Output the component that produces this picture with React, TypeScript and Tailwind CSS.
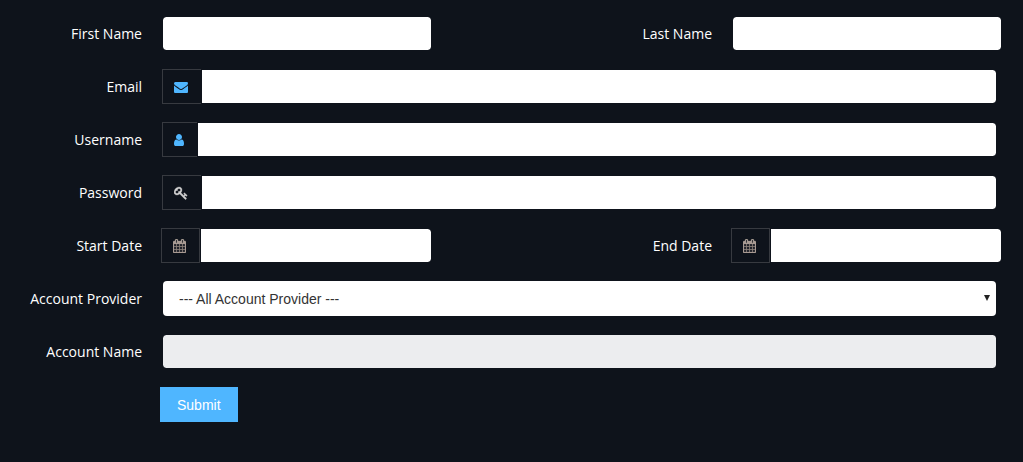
import React from 'react';

const ENVELOPE =
    'M1792 710v794q0 66-47 113t-113 47h-1472q-66 0-113-47t-47-113v-794q44 49 101 87 362 246 497 345 57 42 92.5 65.5t94.5 48 110 24.5h2q51 0 110-24.5t94.5-48 92.5-65.5q170-123 498-345 57-39 100-87zm0-294q0 79-49 151t-122 123q-376 261-468 325-10 7-42.5 31t-54 38.5-52 32.5-57.5 27-50 9h-2q-23 0-50-9t-57.5-27-52-32.5-54-38.5-42.5-31q-91-64-262-182.5t-205-142.5q-62-42-117-115.5t-55-136.5q0-78 41.5-130t118.5-52h1472q65 0 112.5 47t47.5 113z';
const USER =
    'M1536 1399q0 109-62.5 187t-150.5 78h-854q-88 0-150.5-78t-62.5-187q0-85 8.5-160.5t31.5-152 58.5-131 94-89 134.5-34.5q131 128 313 128t313-128q76 0 134.5 34.5t94 89 58.5 131 31.5 152 8.5 160.5zm-256-887q0 159-112.5 271.5t-271.5 112.5-271.5-112.5-112.5-271.5 112.5-271.5 271.5-112.5 271.5 112.5 112.5 271.5z';
const KEY =
    'M832 512q0-80-56-136t-136-56-136 56-56 136q0 42 19 83-41-19-83-19-80 0-136 56t-56 136 56 136 136 56 136-56 56-136q0-42-19-83 41 19 83 19 80 0 136-56t56-136zm851 704q0 17-49 66t-66 49q-9 0-28.5-16t-36.5-33-38.5-40-24.5-26l-96 96 220 220q28 28 28 68 0 42-39 81t-81 39q-40 0-68-28l-671-671q-176 131-365 131-163 0-265.5-102.5t-102.5-265.5q0-160 95-313t248-248 313-95q163 0 265.5 102.5t102.5 265.5q0 189-131 365l355 355 96-96q-3-3-26-24.5t-40-38.5-33-36.5-16-28.5q0-17 49-66t66-49q13 0 23 10 6 6 46 44.5t82 79.5 86.5 86 73 78 28.5 41z';
const CALENDAR =
    'M192 1664h288v-288h-288v288zm352 0h320v-288h-320v288zm-352-352h288v-320h-288v320zm352 0h320v-320h-320v320zm-352-384h288v-288h-288v288zm736 736h320v-288h-320v288zm-384-736h320v-288h-320v288zm768 736h288v-288h-288v288zm-384-352h320v-320h-320v320zm-352-864v-288q0-13-9.5-22.5t-22.5-9.5h-64q-13 0-22.5 9.5t-9.5 22.5v288q0 13 9.5 22.5t22.5 9.5h64q13 0 22.5-9.5t9.5-22.5zm736 864h288v-320h-288v320zm-384-384h320v-288h-320v288zm384 0h288v-288h-288v288zm32-480v-288q0-13-9.5-22.5t-22.5-9.5h-64q-13 0-22.5 9.5t-9.5 22.5v288q0 13 9.5 22.5t22.5 9.5h64q13 0 22.5-9.5t9.5-22.5zm384-64v1280q0 52-38 90t-90 38h-1408q-52 0-90-38t-38-90v-1280q0-52 38-90t90-38h128v-96q0-66 47-113t113-47h64q66 0 113 47t47 113v96h384v-96q0-66 47-113t113-47h64q66 0 113 47t47 113v96h128q52 0 90 38t38 90z';

const wideRow = 'grid grid-cols-[142px_minmax(0,1fr)] items-center gap-x-5 pr-[26px]';
const splitRow = 'grid grid-cols-[142px_minmax(0,1fr)_260px_minmax(0,1fr)] items-center gap-x-5 pr-[21px]';
const addon = 'flex h-[35px] shrink-0 items-center border border-[#373a40] pr-[13px] pl-[11px]';
const control =
    "block h-[35px] w-full min-w-0 border border-[#0e131b] bg-white bg-clip-padding px-4 font-['Liberation_Sans',Arial,sans-serif] text-sm text-[#333] outline-none disabled:bg-[#ecedef]";

const Label: React.FC<{ htmlFor: string; children: React.ReactNode }> = ({ htmlFor, children }) => (
    <label htmlFor={htmlFor} className="text-right text-sm leading-5 whitespace-nowrap text-white">
        {children}
    </label>
);

interface IconInputProps {
    id: string;
    type?: string;
    icon: React.ReactNode;
}

const IconInput: React.FC<IconInputProps> = ({ id, type = 'text', icon }) => (
    <div className="flex">
        <span className={`${addon} border-r-0`}>{icon}</span>
        <input id={id} type={type} className={`${control} rounded-r`} />
    </div>
);

const DateInput: React.FC<{ id: string }> = ({ id }) => (
    <div className="-ml-px flex">
        <span className={addon}>
            <svg
                viewBox="64 0 1664 1792"
                className="h-[14px] w-[13px] fill-[#a89c94] stroke-[#a89c94] stroke-[36]"
            >
                <path d={CALENDAR} />
            </svg>
        </span>
        <input id={id} type="text" className={`${control} rounded-r`} />
    </div>
);

export default function App() {
    return (
        <div className="min-h-screen bg-[#0e131b] font-['Open_Sans',sans-serif]">
            <form className="flex flex-col gap-[18px] py-4" onSubmit={(e) => e.preventDefault()}>
                <div className={splitRow}>
                    <Label htmlFor="first-name">First Name</Label>
                    <input id="first-name" type="text" className={`${control} rounded`} />
                    <Label htmlFor="last-name">Last Name</Label>
                    <input id="last-name" type="text" className={`${control} rounded`} />
                </div>

                <div className={wideRow}>
                    <Label htmlFor="email">Email</Label>
                    <IconInput
                        id="email"
                        type="email"
                        icon={
                            <svg viewBox="0 0 1792 1792" className="h-[14px] w-[14px] fill-[#4fb6ff]">
                                <path d={ENVELOPE} />
                            </svg>
                        }
                    />
                </div>

                <div className={wideRow}>
                    <Label htmlFor="username">Username</Label>
                    <IconInput
                        id="username"
                        icon={
                            <svg viewBox="256 0 1280 1792" className="h-[14px] w-[10px] fill-[#4fb6ff]">
                                <path d={USER} />
                            </svg>
                        }
                    />
                </div>

                <div className={wideRow}>
                    <Label htmlFor="password">Password</Label>
                    <IconInput
                        id="password"
                        type="password"
                        icon={
                            <svg
                                viewBox="0 0 1792 1792"
                                className="h-[14px] w-[14px] fill-[#d0d0d0] stroke-[#d0d0d0] stroke-[40]"
                            >
                                <path d={KEY} />
                            </svg>
                        }
                    />
                </div>

                <div className={splitRow}>
                    <Label htmlFor="start-date">Start Date</Label>
                    <DateInput id="start-date" />
                    <Label htmlFor="end-date">End Date</Label>
                    <DateInput id="end-date" />
                </div>

                <div className={wideRow}>
                    <Label htmlFor="provider">Account Provider</Label>
                    <div className="relative px-px">
                        <select
                            id="provider"
                            className="block h-[35px] w-full appearance-none rounded bg-white px-4 font-['Liberation_Sans',Arial,sans-serif] text-sm text-[#333] outline-none"
                        >
                            <option>--- All Account Provider ---</option>
                        </select>
                        <svg
                            viewBox="0 0 6 6"
                            className="pointer-events-none absolute top-[14px] right-[7px] h-[6px] w-[6px] fill-[#222]"
                        >
                            <path d="M0 0h6L3 6z" />
                        </svg>
                    </div>
                </div>

                <div className={wideRow}>
                    <Label htmlFor="account-name">Account Name</Label>
                    <input id="account-name" type="text" disabled className={`${control} rounded`} />
                </div>

                <div className="pl-40">
                    <button
                        type="submit"
                        className="block h-[35px] bg-[#4fb6ff] px-[17px] font-['Liberation_Sans',Arial,sans-serif] text-sm text-white"
                    >
                        Submit
                    </button>
                </div>
            </form>
        </div>
    );
}
